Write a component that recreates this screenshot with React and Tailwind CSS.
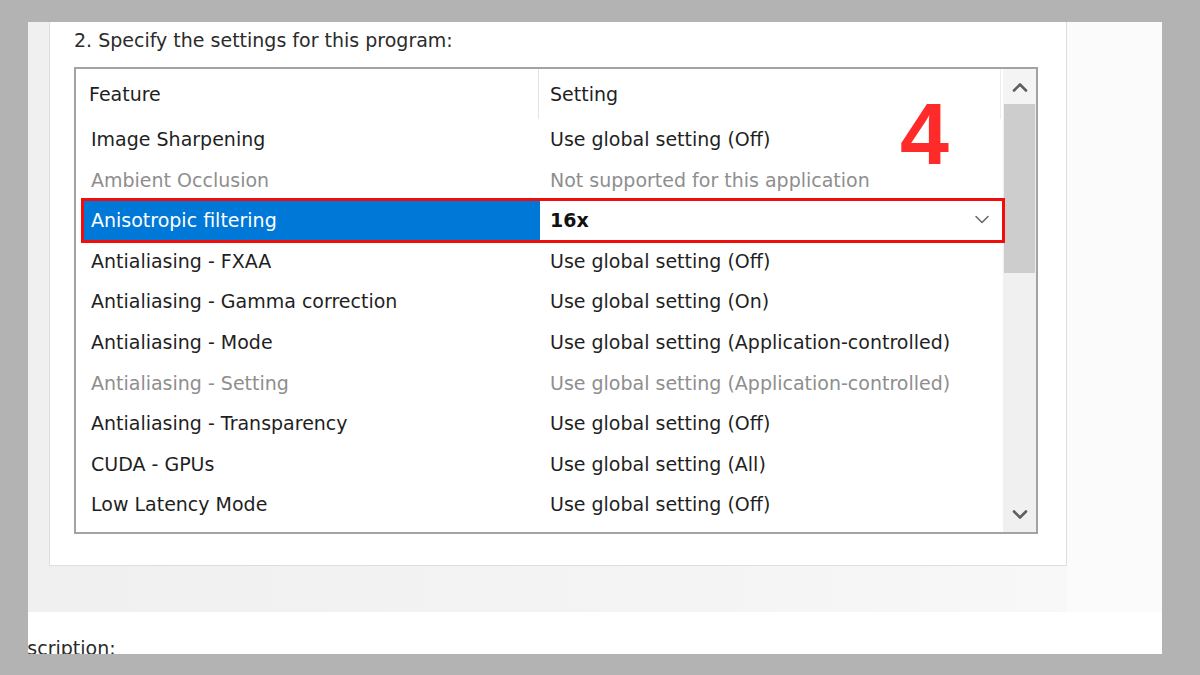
import React from "react";

const rows = [
    {feature: "Image Sharpening", setting: "Use global setting (Off)"},
    {feature: "Ambient Occlusion", setting: "Not supported for this application", disabled: true},
    {feature: "Anisotropic filtering", setting: "16x", selected: true},
    {feature: "Antialiasing - FXAA", setting: "Use global setting (Off)"},
    {feature: "Antialiasing - Gamma correction", setting: "Use global setting (On)"},
    {feature: "Antialiasing - Mode", setting: "Use global setting (Application-controlled)"},
    {feature: "Antialiasing - Setting", setting: "Use global setting (Application-controlled)", disabled: true},
    {feature: "Antialiasing - Transparency", setting: "Use global setting (Off)"},
    {feature: "CUDA - GPUs", setting: "Use global setting (All)"},
    {feature: "Low Latency Mode", setting: "Use global setting (Off)"},
];

const Chevron = ({up, className}) => (
    <svg width="16" height="10" viewBox="0 0 16 10" className={className}>
        <path d={up ? "M2 8.5 L8 2.5 L14 8.5" : "M2 1.5 L8 7.5 L14 1.5"} fill="none" stroke="currentColor"
              strokeWidth="2.6" strokeLinecap="round" strokeLinejoin="round"/>
    </svg>
);

const Row = ({row}) => {
    if (row.selected) {
        return (
            <div className="relative flex h-[40.6px] items-stretch">
                <div className="ml-[8px] flex w-[456px] items-center bg-[#0078d7] pl-[7px] text-white">
                    {row.feature}
                </div>
                <div className="flex flex-1 items-center justify-between pl-[10px] pr-[13px]">
                    <span className="font-bold text-[#111]">{row.setting}</span>
                    <Chevron className="text-[#6b6b6b] [&_path]:[stroke-width:1.6]"/>
                </div>
                {/* annotation box */}
                <div className="absolute left-[5px] top-[-2px] h-[45px] w-[924px] border-[3px] border-[#f20d0d]"/>
            </div>
        );
    }
    const color = row.disabled ? "text-[#8e8e8e]" : "text-[#1f1f1f]";
    return (
        <div className={`flex h-[40.6px] items-center ${color}`}>
            <div className="w-[462px] pl-[15px]">{row.feature}</div>
            <div className="flex-1 pl-[12px]">{row.setting}</div>
        </div>
    );
};

const App = () => {
    return (
        <div className="h-[675px] w-[1200px] overflow-hidden bg-[#b3b3b3] pl-[28px] pt-[22px] font-['DejaVu_Sans',sans-serif] text-[19px]">
            <div className="flex h-[632px] w-[1134px] flex-col overflow-hidden">
                <div className="flex h-[590px]">
                    <div className="w-[21px] bg-[#f0f0f0]"/>
                    <div className="flex w-[1018px] flex-col">
                        <div className="h-[544px] border-x border-b border-[#dedede] bg-white pl-[24px] pt-[6px]">
                            <p className="leading-[24px] text-[#2b2b2b]">2. Specify the settings for this program:</p>
                            <div className="relative mt-[15px] flex h-[467px] w-[964px] border-2 border-[#a3a3a3] bg-white">
                                <div className="flex-1">
                                    <div className="flex h-[50px] items-center text-[#1f1f1f]">
                                        <div className="w-[462px] pl-[13px]">Feature</div>
                                        <div className="h-full w-px bg-[#e3e3e3]"/>
                                        <div className="flex-1 pl-[11px]">Setting</div>
                                        <div className="mr-[2px] h-full w-px bg-[#ececec]"/>
                                    </div>
                                    {rows.map((row) => (
                                        <Row key={row.feature} row={row}/>
                                    ))}
                                </div>
                                <div className="flex w-[33px] flex-col bg-[#f0f0f0]">
                                    <div className="flex h-[35px] items-center justify-center bg-[#f4f4f4] text-[#5f5f5f]">
                                        <Chevron up/>
                                    </div>
                                    <div className="mx-[1px] h-[169px] bg-[#cdcdcd]"/>
                                    <div className="flex-1"/>
                                    <div className="flex h-[35px] items-center justify-center text-[#5f5f5f]">
                                        <Chevron/>
                                    </div>
                                </div>
                                <span className="absolute left-[824px] top-[21px] font-['Liberation_Sans',Arial,sans-serif] text-[88px] font-bold leading-none text-[#ff2b2b]">4</span>
                            </div>
                        </div>
                        <div className="flex-1 bg-gradient-to-r from-[#f0f0f0] via-[#f3f3f3] to-[#f8f8f8]"/>
                    </div>
                    <div className="flex-1 bg-[#fbfbfb]"/>
                </div>
                <div className="flex-1 overflow-hidden bg-white pt-[24px]">
                    <p className="ml-[-27px] leading-[24px] text-[#2b2b2b]">Description:</p>
                </div>
            </div>
        </div>
    );
};

export default App;
